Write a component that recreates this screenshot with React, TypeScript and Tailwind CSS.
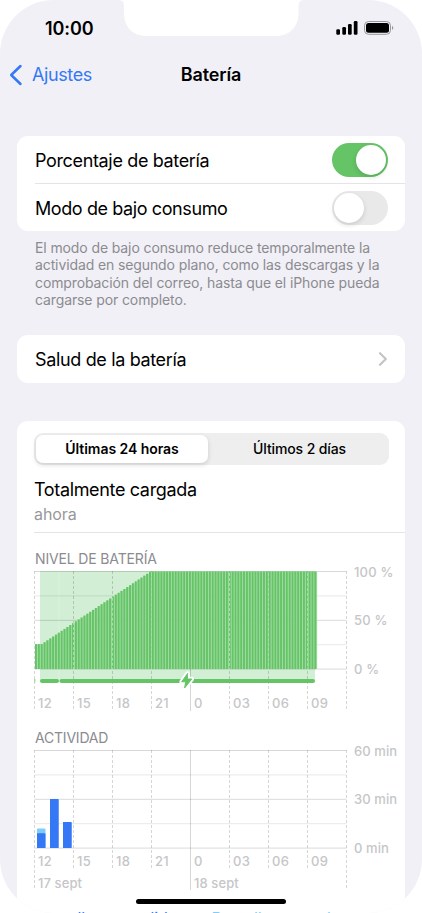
import type { ReactNode } from "react"

const HOURS = ["12", "15", "18", "21", "0", "03", "06", "09"]

// One bar every 2.85px, about a quarter of an hour each
const LEVELS = Array.from({ length: 99 }, (_, i) => {
  if (i < 3) return 25.5
  return Math.min(100, 25.5 + (i - 2) * 1.95)
})

const ACTIVITY = [
  { on: 9, off: 3 },
  { on: 30, off: 0 },
  { on: 16, off: 0 },
]

const CHART_LEFT = 0.5
const STEP = 39
const CHART_WIDTH = STEP * 8

const BOLT = "M153.6 102.4 147.6 110.8H151.6L150.6 117 157.8 108H153.4Z"

const Toggle = ({ on }: { on: boolean }) => (
  <button
    role="switch"
    aria-checked={on}
    className={`flex h-[34px] w-14 items-center rounded-full px-0.5 ${
      on ? "justify-end bg-[#65c466]" : "justify-start bg-[#e9e9ea]"
    }`}
  >
    <span className="size-[30px] rounded-full bg-white shadow-[0_2px_5px_rgba(0,0,0,0.14)]" />
  </button>
)

const Card = ({ children, className = "" }: { children: ReactNode; className?: string }) => (
  <section className={`mx-[17px] rounded-[11px] bg-white ${className}`}>{children}</section>
)

const Grid = ({ bottom, ends }: { bottom: number; ends: number }) => (
  <g>
    {[0, 1, 2, 3, 4].map((i) => (
      <line
        key={i}
        x1={CHART_LEFT}
        x2={CHART_LEFT + CHART_WIDTH}
        y1={0.5 + i * 24.4}
        y2={0.5 + i * 24.4}
        stroke="#000"
        strokeOpacity={i % 2 ? 0.09 : 0.15}
      />
    ))}
    {Array.from({ length: 9 }, (_, i) => (
      <line
        key={i}
        x1={CHART_LEFT + i * STEP}
        x2={CHART_LEFT + i * STEP}
        y1={0}
        y2={i === 0 || i === 4 || i === 8 ? ends : bottom}
        stroke="#000"
        strokeOpacity={0.16}
        strokeDasharray={i === 4 ? undefined : "3 2"}
      />
    ))}
  </g>
)

const HourLabels = ({ y }: { y: number }) => (
  <g>
    {HOURS.map((hour, i) => (
      <text key={hour} x={4 + i * STEP} y={y} fontSize="13" letterSpacing="0.3">
        {hour}
      </text>
    ))}
  </g>
)

const BatteryChart = () => (
  <svg
    width="370"
    height="144"
    viewBox="0 0 370 144"
    overflow="visible"
    className="block font-medium"
    fill="#c6c6c8"
  >
    <rect x="6" y="0" width="275" height="111" fill="#d2efd5" />
    <rect x="24.5" y="0" width="1" height="110" fill="#dcf3de" />
    <Grid bottom={139} ends={140} />
    {LEVELS.map((level, i) => (
      <g key={i}>
        <rect x={1 + i * 2.85} y={98 - level * 0.975} width="2.85" height={level * 0.975} fill="#a5dda8" />
        <rect x={1 + i * 2.85} y={98 - level * 0.975} width="1.95" height={level * 0.975} fill="#65c466" />
      </g>
    ))}
    {[1, 2, 3, 5, 6, 7].map((i) => (
      <line
        key={i}
        x1={CHART_LEFT + i * STEP}
        x2={CHART_LEFT + i * STEP}
        y1={98 - LEVELS[Math.round(i * 13.7)] * 0.96}
        y2="98"
        stroke="#a5dda8"
        strokeDasharray="3 2"
      />
    ))}
    <rect x="0" y="108" width="1.5" height="3.5" fill="#a5dda8" />
    <rect x="6" y="108" width="19" height="4" rx="2" fill="#65c466" />
    <rect x="25.5" y="108" width="255.5" height="4" rx="2" fill="#65c466" />
    <path d={BOLT} fill="#fff" stroke="#fff" strokeWidth="4.5" strokeLinejoin="round" />
    <path d={BOLT} fill="#65c466" stroke="#65c466" strokeWidth="0.9" strokeLinejoin="round" />
    <HourLabels y={137} />
    <g fontSize="13" letterSpacing="0.2">
      <text x="320" y="5.5">100 %</text>
      <text x="320" y="54">50 %</text>
      <text x="320" y="102.5">0 %</text>
    </g>
  </svg>
)

const ActivityChart = () => (
  <svg
    width="370"
    height="144"
    viewBox="0 0 370 144"
    overflow="visible"
    className="block font-medium"
    fill="#c6c6c8"
  >
    <Grid bottom={118} ends={140} />
    {ACTIVITY.map(({ on, off }, i) => (
      <g key={i}>
        <rect x={3 + i * 13} y={98 - (on + off) * 1.63} width="8.5" height={(on + off) * 1.63} rx="1" fill={off ? "#7fcbfa" : "#3478f6"} />
        <rect x={3 + i * 13} y={98 - on * 1.63} width="8.5" height={on * 1.63} rx="0.6" fill="#3478f6" />
      </g>
    ))}
    <HourLabels y={115.5} />
    <g fontSize="13" letterSpacing="0.1">
      <text x="4" y="137.5">17 sept</text>
      <text x="160" y="137.5">18 sept</text>
      <text x="320" y="5.5">60 min</text>
      <text x="320" y="54">30 min</text>
      <text x="320" y="102.5">0 min</text>
    </g>
  </svg>
)

const StatusBar = () => (
  <div className="flex h-[54px] items-start justify-between">
    <div className="w-[124px] pt-[18px] pl-[45px] text-[18px] leading-[22px] font-semibold tracking-[-0.1px]">10:00</div>
    <svg width="176" height="37" viewBox="0 0 176 37" fill="#fff" overflow="visible" className="shrink-0">
      <path d="M-5 0Q0 0 0 6V13C0 27 9 36 23 36H151.5C165.5 36 174.5 27 174.5 13V6Q174.5 0 179.5 0Z" />
    </svg>
    <div className="w-[122px] pt-[20px] pl-[36px]">
      <svg width="60" height="16" viewBox="0 0 60 16">
        <rect x="0.3" y="9.2" width="3.7" height="5.5" rx="1.2" />
        <rect x="6.3" y="7" width="3.7" height="7.7" rx="1.2" />
        <rect x="12" y="4" width="3.7" height="10.7" rx="1.2" />
        <rect x="17.8" y="1" width="3.7" height="13.7" rx="1.2" />
        <rect x="28.5" y="1.5" width="26" height="12.8" rx="4" fill="none" stroke="#98989c" />
        <rect x="30" y="3" width="23" height="9.8" rx="2.5" />
        <path d="M56 5.7Q58.6 7.9 56 10.1Z" fill="#98989c" />
      </svg>
    </div>
  </div>
)

export default function App() {
  return (
    <div className="h-[913px] w-[422px] overflow-hidden bg-white font-['Inter','Liberation_Sans',sans-serif] text-black">
      <div className="relative h-[913px] overflow-hidden rounded-[54px] bg-[#f1f0f6]">
        <StatusBar />

        <header className="grid h-[42px] grid-cols-3 items-center text-[18px]">
          <button className="flex items-center gap-[9px] pb-px pl-[9px] tracking-[-0.4px] text-[#3478f6]">
            <svg width="14" height="22" viewBox="0 0 14 22" fill="none" stroke="currentColor" strokeWidth="2.5" strokeLinecap="round" strokeLinejoin="round">
              <path d="M11.5 2 2.2 11 11.5 20" />
            </svg>
            Ajustes
          </button>
          <h1 className="pb-px text-center font-semibold tracking-[-0.15px]">Batería</h1>
        </header>

        <Card className="mt-10 pl-[18px]">
          <div className="flex h-[47px] items-center justify-between pr-[17px] text-[18px] tracking-[-0.35px]">
            <span className="pt-0.5">Porcentaje de batería</span>
            <Toggle on />
          </div>
          <div className="flex h-12 items-center justify-between border-t border-[#e4e4e6] pr-[17px] text-[18px] tracking-[-0.4px]">
            <span className="pt-0.5">Modo de bajo consumo</span>
            <Toggle on={false} />
          </div>
        </Card>
        <p className="mt-2 ml-[35px] text-[14px] leading-[17.3px] tracking-[-0.11px] whitespace-nowrap text-[#8b8b90]">
          El modo de bajo consumo reduce temporalmente la
          <br />
          actividad en segundo plano, como las descargas y la
          <br />
          comprobación del correo, hasta que el iPhone pueda
          <br />
          cargarse por completo.
        </p>

        <Card className="mt-[27px] flex h-12 items-center justify-between pr-[17px] pl-[18px] text-[18px] tracking-[-0.35px]">
          Salud de la batería
          <svg width="10" height="16" viewBox="0 0 10 16" fill="none" stroke="#c4c4c7" strokeWidth="2.2" strokeLinecap="round" strokeLinejoin="round">
            <path d="M2 2.2 7.8 8 2 13.8" />
          </svg>
        </Card>

        <Card className="mt-[38px] h-[520px] pt-3 pl-[17px]">
          <div className="flex h-8 w-[355px] rounded-[9px] bg-[#eeeeef] p-0.5 text-[14px]">
            <button className="w-[172px] rounded-[7px] bg-white pb-0.5 font-semibold tracking-[-0.05px] shadow-[0_2px_5px_rgba(0,0,0,0.14)]">
              Últimas 24 horas
            </button>
            <button className="flex-1 pb-0.5 pl-1 font-medium tracking-[-0.12px]">Últimos 2 días</button>
          </div>
          <div className="h-[68px] border-b border-[#e4e4e6] pt-[13px]">
            <div className="text-[18px] leading-6 tracking-[-0.35px]">Totalmente cargada</div>
            <div className="text-[16px] leading-6 tracking-[-0.1px] text-[#98989b]">ahora</div>
          </div>

          <h2 className="mt-4 h-[22px] pl-px text-[14px] leading-5 tracking-[-0.15px] text-[#8b8b90]">NIVEL DE BATERÍA</h2>
          <BatteryChart />
          <h2 className="mt-[13px] h-[22px] pl-px text-[14px] leading-5 tracking-[-0.2px] text-[#8b8b90]">ACTIVIDAD</h2>
          <ActivityChart />
          <div className="mt-3 flex gap-[35px] pl-px text-[16px] leading-6 tracking-[-0.1px] whitespace-nowrap">
            <span className="text-[#3478f6]">Pantalla encendida</span>
            <span className="text-[#7fcbfa]">Pantalla apagada</span>
          </div>
        </Card>

        <div className="absolute bottom-[9px] left-[136px] h-[5px] w-[150px] rounded-full bg-black" />
      </div>
    </div>
  )
}
